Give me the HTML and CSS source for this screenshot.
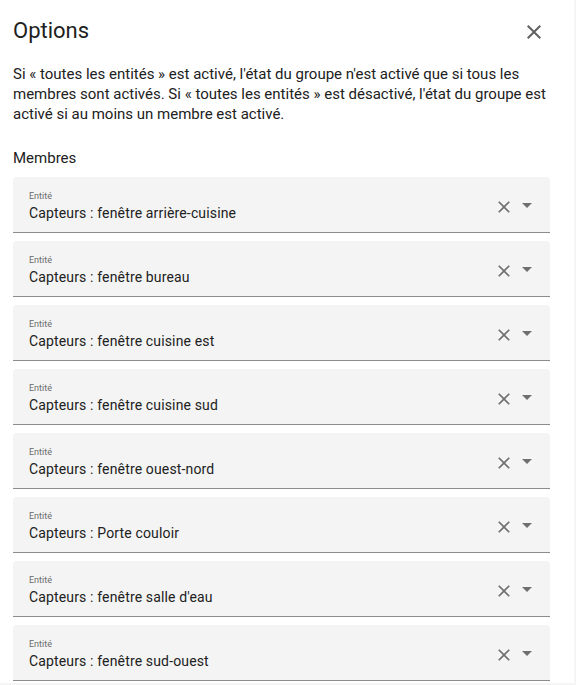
FILE: index.html
```html
<!DOCTYPE html>
<html lang="fr">
    <head>
        <title>Options</title>
        <link rel="stylesheet" href="styles.css">
    </head>
    <body>
        <div class="dialog">
            <div class="header">
                <h2 class="title">Options</h2>
                <button class="close" aria-label="Fermer">
                    <svg viewBox="0 0 24 24" width="24" height="24"><path d="M19,6.41L17.59,5L12,10.59L6.41,5L5,6.41L10.59,12L5,17.59L6.41,19L12,13.41L17.59,19L19,17.59L13.41,12L19,6.41Z"/></svg>
                </button>
            </div>

            <p class="desc">Si « toutes les entités » est activé, l'état du groupe n'est activé que si tous les membres sont activés. Si « toutes les entités » est désactivé, l'état du groupe est activé si au moins un membre est activé.</p>

            <div class="section">Membres</div>

            <div class="fields">
                <div class="field">
                    <div class="field-text">
                        <span class="label">Entité</span>
                        <span class="value">Capteurs : fenêtre arrière-cuisine</span>
                    </div>
                    <svg class="clear" viewBox="0 0 24 24"><path d="M19,6.41L17.59,5L12,10.59L6.41,5L5,6.41L10.59,12L5,17.59L6.41,19L12,13.41L17.59,19L19,17.59L13.41,12L19,6.41Z"/></svg>
                    <svg class="drop" viewBox="0 0 24 24"><path d="M7,10L12,15L17,10H7Z"/></svg>
                </div>
                <div class="field">
                    <div class="field-text">
                        <span class="label">Entité</span>
                        <span class="value">Capteurs : fenêtre bureau</span>
                    </div>
                    <svg class="clear" viewBox="0 0 24 24"><path d="M19,6.41L17.59,5L12,10.59L6.41,5L5,6.41L10.59,12L5,17.59L6.41,19L12,13.41L17.59,19L19,17.59L13.41,12L19,6.41Z"/></svg>
                    <svg class="drop" viewBox="0 0 24 24"><path d="M7,10L12,15L17,10H7Z"/></svg>
                </div>
                <div class="field">
                    <div class="field-text">
                        <span class="label">Entité</span>
                        <span class="value">Capteurs : fenêtre cuisine est</span>
                    </div>
                    <svg class="clear" viewBox="0 0 24 24"><path d="M19,6.41L17.59,5L12,10.59L6.41,5L5,6.41L10.59,12L5,17.59L6.41,19L12,13.41L17.59,19L19,17.59L13.41,12L19,6.41Z"/></svg>
                    <svg class="drop" viewBox="0 0 24 24"><path d="M7,10L12,15L17,10H7Z"/></svg>
                </div>
                <div class="field">
                    <div class="field-text">
                        <span class="label">Entité</span>
                        <span class="value">Capteurs : fenêtre cuisine sud</span>
                    </div>
                    <svg class="clear" viewBox="0 0 24 24"><path d="M19,6.41L17.59,5L12,10.59L6.41,5L5,6.41L10.59,12L5,17.59L6.41,19L12,13.41L17.59,19L19,17.59L13.41,12L19,6.41Z"/></svg>
                    <svg class="drop" viewBox="0 0 24 24"><path d="M7,10L12,15L17,10H7Z"/></svg>
                </div>
                <div class="field">
                    <div class="field-text">
                        <span class="label">Entité</span>
                        <span class="value">Capteurs : fenêtre ouest-nord</span>
                    </div>
                    <svg class="clear" viewBox="0 0 24 24"><path d="M19,6.41L17.59,5L12,10.59L6.41,5L5,6.41L10.59,12L5,17.59L6.41,19L12,13.41L17.59,19L19,17.59L13.41,12L19,6.41Z"/></svg>
                    <svg class="drop" viewBox="0 0 24 24"><path d="M7,10L12,15L17,10H7Z"/></svg>
                </div>
                <div class="field">
                    <div class="field-text">
                        <span class="label">Entité</span>
                        <span class="value">Capteurs : Porte couloir</span>
                    </div>
                    <svg class="clear" viewBox="0 0 24 24"><path d="M19,6.41L17.59,5L12,10.59L6.41,5L5,6.41L10.59,12L5,17.59L6.41,19L12,13.41L17.59,19L19,17.59L13.41,12L19,6.41Z"/></svg>
                    <svg class="drop" viewBox="0 0 24 24"><path d="M7,10L12,15L17,10H7Z"/></svg>
                </div>
                <div class="field">
                    <div class="field-text">
                        <span class="label">Entité</span>
                        <span class="value">Capteurs : fenêtre salle d'eau</span>
                    </div>
                    <svg class="clear" viewBox="0 0 24 24"><path d="M19,6.41L17.59,5L12,10.59L6.41,5L5,6.41L10.59,12L5,17.59L6.41,19L12,13.41L17.59,19L19,17.59L13.41,12L19,6.41Z"/></svg>
                    <svg class="drop" viewBox="0 0 24 24"><path d="M7,10L12,15L17,10H7Z"/></svg>
                </div>
                <div class="field">
                    <div class="field-text">
                        <span class="label">Entité</span>
                        <span class="value">Capteurs : fenêtre sud-ouest</span>
                    </div>
                    <svg class="clear" viewBox="0 0 24 24"><path d="M19,6.41L17.59,5L12,10.59L6.41,5L5,6.41L10.59,12L5,17.59L6.41,19L12,13.41L17.59,19L19,17.59L13.41,12L19,6.41Z"/></svg>
                    <svg class="drop" viewBox="0 0 24 24"><path d="M7,10L12,15L17,10H7Z"/></svg>
                </div>
            </div>
        </div>
    </body>
</html>
```

FILE: styles.css
```css
html, body{
    margin: 0;
    height: 100%;
    overflow: hidden;
    background: #f5f5f5;
}
body{
    font-family: Roboto, "Liberation Sans", sans-serif;
    color: #212121;
}
.dialog{
    background: #ffffff;
    width: 574px;
    height: 683px;
    padding: 0 24px 0 13px;
    box-sizing: border-box;
}
.header{
    display: flex;
    align-items: center;
    justify-content: space-between;
    height: 64px;
}
.title{
    margin: 0;
    font-size: 22px;
    font-weight: 400;
    line-height: 62px;
    align-self: flex-start;
}
.close{
    border: none;
    background: none;
    padding: 0;
    width: 24px;
    height: 24px;
    margin-right: 4px;
    cursor: pointer;
}
.close svg{
    fill: #616161;
    display: block;
}
.desc{
    margin: 0;
    font-size: 15px;
    line-height: 20px;
}
.section{
    font-size: 15px;
    line-height: 20px;
    margin-top: 24px;
    margin-bottom: 9px;
}
.fields{
    display: flex;
    flex-direction: column;
    gap: 8px;
}
.field{
    display: flex;
    align-items: center;
    height: 56px;
    box-sizing: border-box;
    background: #f4f4f4;
    border-radius: 4px 4px 0 0;
    border-bottom: 1px solid #8c8c8c;
    padding: 0 11px 0 16px;
}
.field-text{
    flex: 1;
    align-self: flex-start;
    display: flex;
    flex-direction: column;
    padding-top: 14px;
}
.label{
    font-size: 9px;
    line-height: 11px;
    color: #6b6b6b;
}
.value{
    font-size: 14px;
    line-height: 20px;
    letter-spacing: 0.15px;
    margin-top: 1px;
}
.clear{
    width: 20px;
    height: 20px;
    fill: #6f6f6f;
    margin-top: 5px;
}
.drop{
    width: 24px;
    height: 24px;
    fill: #6f6f6f;
    margin-left: 1px;
    margin-top: 1px;
}
```
